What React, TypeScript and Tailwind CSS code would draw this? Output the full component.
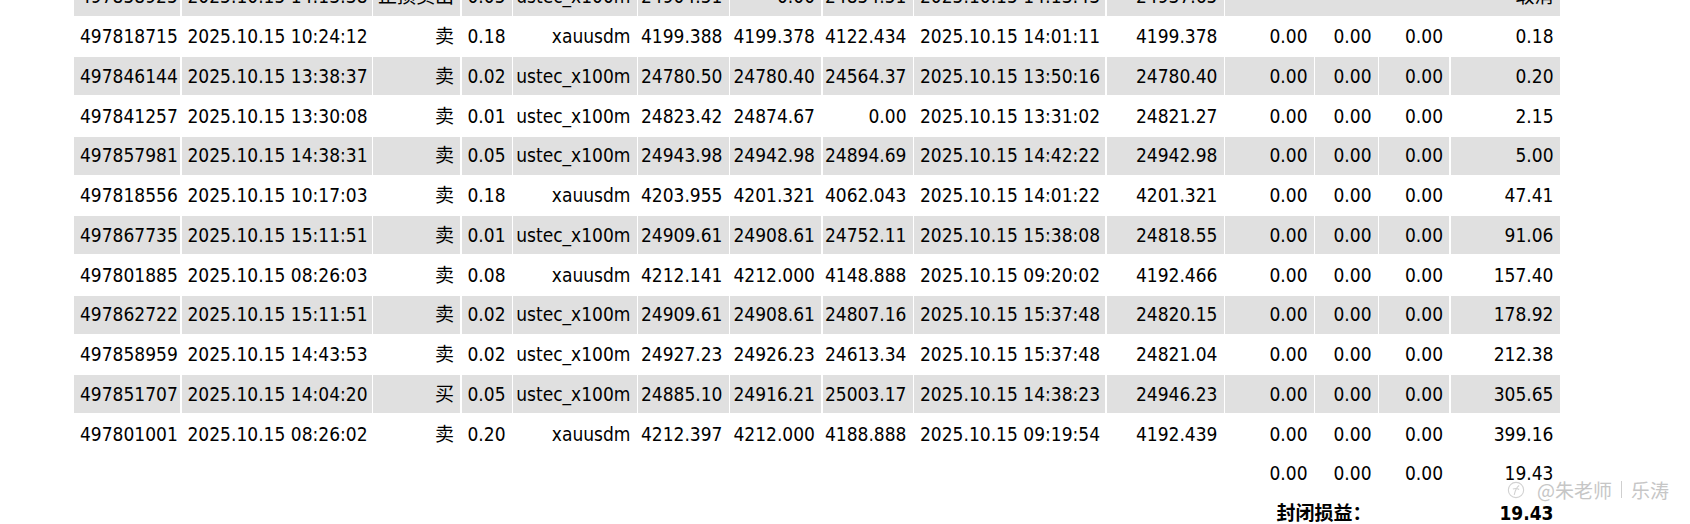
const GRID =
  "grid grid-cols-[106px_190px_87px_50px_123.5px_90.5px_91px_90px_191px_117px_88.5px_62.5px_70px_109px] auto-rows-[38.25px] gap-[1.5px]";

type Trade = {
  ticket: string;
  openTime: string;
  type: string;
  size: string;
  item: string;
  price: string;
  sl: string;
  tp: string;
  closeTime: string;
  closePrice: string;
  profit: string;
};

const trades: Trade[] = [
  { ticket: "497818715", openTime: "2025.10.15 10:24:12", type: "卖", size: "0.18", item: "xauusdm", price: "4199.388", sl: "4199.378", tp: "4122.434", closeTime: "2025.10.15 14:01:11", closePrice: "4199.378", profit: "0.18" },
  { ticket: "497846144", openTime: "2025.10.15 13:38:37", type: "卖", size: "0.02", item: "ustec_x100m", price: "24780.50", sl: "24780.40", tp: "24564.37", closeTime: "2025.10.15 13:50:16", closePrice: "24780.40", profit: "0.20" },
  { ticket: "497841257", openTime: "2025.10.15 13:30:08", type: "卖", size: "0.01", item: "ustec_x100m", price: "24823.42", sl: "24874.67", tp: "0.00", closeTime: "2025.10.15 13:31:02", closePrice: "24821.27", profit: "2.15" },
  { ticket: "497857981", openTime: "2025.10.15 14:38:31", type: "卖", size: "0.05", item: "ustec_x100m", price: "24943.98", sl: "24942.98", tp: "24894.69", closeTime: "2025.10.15 14:42:22", closePrice: "24942.98", profit: "5.00" },
  { ticket: "497818556", openTime: "2025.10.15 10:17:03", type: "卖", size: "0.18", item: "xauusdm", price: "4203.955", sl: "4201.321", tp: "4062.043", closeTime: "2025.10.15 14:01:22", closePrice: "4201.321", profit: "47.41" },
  { ticket: "497867735", openTime: "2025.10.15 15:11:51", type: "卖", size: "0.01", item: "ustec_x100m", price: "24909.61", sl: "24908.61", tp: "24752.11", closeTime: "2025.10.15 15:38:08", closePrice: "24818.55", profit: "91.06" },
  { ticket: "497801885", openTime: "2025.10.15 08:26:03", type: "卖", size: "0.08", item: "xauusdm", price: "4212.141", sl: "4212.000", tp: "4148.888", closeTime: "2025.10.15 09:20:02", closePrice: "4192.466", profit: "157.40" },
  { ticket: "497862722", openTime: "2025.10.15 15:11:51", type: "卖", size: "0.02", item: "ustec_x100m", price: "24909.61", sl: "24908.61", tp: "24807.16", closeTime: "2025.10.15 15:37:48", closePrice: "24820.15", profit: "178.92" },
  { ticket: "497858959", openTime: "2025.10.15 14:43:53", type: "卖", size: "0.02", item: "ustec_x100m", price: "24927.23", sl: "24926.23", tp: "24613.34", closeTime: "2025.10.15 15:37:48", closePrice: "24821.04", profit: "212.38" },
  { ticket: "497851707", openTime: "2025.10.15 14:04:20", type: "买", size: "0.05", item: "ustec_x100m", price: "24885.10", sl: "24916.21", tp: "25003.17", closeTime: "2025.10.15 14:38:23", closePrice: "24946.23", profit: "305.65" },
  { ticket: "497801001", openTime: "2025.10.15 08:26:02", type: "卖", size: "0.20", item: "xauusdm", price: "4212.397", sl: "4212.000", tp: "4188.888", closeTime: "2025.10.15 09:19:54", closePrice: "4192.439", profit: "399.16" },
];

function Cell({ gray, right, children, className = "" }: { gray?: boolean; right?: boolean; children?: React.ReactNode; className?: string }) {
  return (
    <div
      className={`flex items-center px-[6px] whitespace-nowrap overflow-hidden ${right ? "justify-end" : "justify-start"} ${gray ? "bg-[#e0e0e0]" : "bg-white"} ${className}`}
    >
      {children}
    </div>
  );
}

function TradeRow({ t, gray }: { t: Trade; gray: boolean }) {
  return (
    <>
      <Cell gray={gray}>{t.ticket}</Cell>
      <Cell gray={gray}>{t.openTime}</Cell>
      <Cell gray={gray} right>{t.type}</Cell>
      <Cell gray={gray}>{t.size}</Cell>
      <Cell gray={gray} right>{t.item}</Cell>
      <Cell gray={gray} right>{t.price}</Cell>
      <Cell gray={gray} right>{t.sl}</Cell>
      <Cell gray={gray} right>{t.tp}</Cell>
      <Cell gray={gray}>{t.closeTime}</Cell>
      <Cell gray={gray} right>{t.closePrice}</Cell>
      <Cell gray={gray} right>0.00</Cell>
      <Cell gray={gray} right>0.00</Cell>
      <Cell gray={gray} right>0.00</Cell>
      <Cell gray={gray} right>{t.profit}</Cell>
    </>
  );
}

function Watermark() {
  return (
    <div className="absolute left-[1507px] top-[480px] flex items-center gap-[12px] text-[#c6c6c6] text-[19px] leading-none [font-family:'Noto_Sans_CJK_SC',sans-serif]">
      <svg width="18" height="18" viewBox="0 0 20 20" fill="none" stroke="#d2d2d2" strokeWidth="1.2">
        <circle cx="10" cy="10" r="8.5" />
        <path d="M8 15.5 C9 11 10.5 7 13.5 5" />
        <path d="M6.5 9 C9 8 11 8 13.5 9.5" />
      </svg>
      <span className="flex items-center gap-[9px]">
        <span>@朱老师</span>
        <span className="w-px h-[17px] bg-[#cfcfcf]" />
        <span>乐涛</span>
      </span>
    </div>
  );
}

export default function App() {
  return (
    <div className="relative w-[1690px] h-[524px] overflow-hidden bg-white text-black text-[19px] [font-family:'DejaVu_Sans_Condensed','Noto_Sans_CJK_SC',sans-serif]">
      <div className={`${GRID} ml-[74px] -mt-[22.5px] w-[1486px]`}>
        {/* cancelled pending order, scrolled half out of view */}
        <Cell gray>497858925</Cell>
        <Cell gray>2025.10.15 14:13:38</Cell>
        <Cell gray right>止损卖出</Cell>
        <Cell gray>0.05</Cell>
        <Cell gray right>ustec_x100m</Cell>
        <Cell gray right>24904.51</Cell>
        <Cell gray right>0.00</Cell>
        <Cell gray right>24854.51</Cell>
        <Cell gray>2025.10.15 14:13:43</Cell>
        <Cell gray right>24937.65</Cell>
        <Cell gray right className="col-span-4">取消</Cell>

        {trades.map((t, i) => (
          <TradeRow key={t.ticket} t={t} gray={i % 2 === 1} />
        ))}

        {/* totals */}
        <Cell className="col-span-10" />
        <Cell right>0.00</Cell>
        <Cell right>0.00</Cell>
        <Cell right>0.00</Cell>
        <Cell right>19.43</Cell>

        <Cell className="col-span-10" />
        <Cell right className="col-span-2 font-bold">封闭损益：</Cell>
        <Cell />
        <Cell right className="font-bold">19.43</Cell>
      </div>
      <Watermark />
    </div>
  );
}
